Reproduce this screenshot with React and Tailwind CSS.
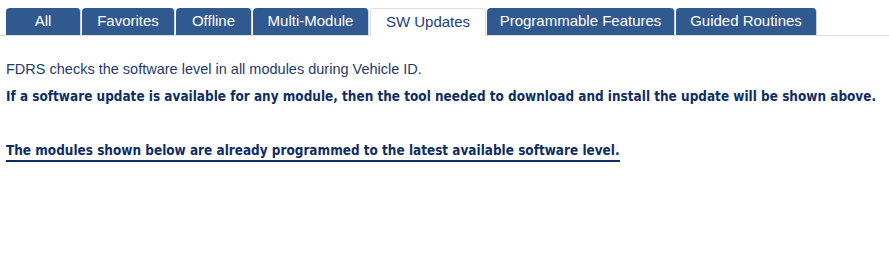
import React from "react";

const tabs = [
  { label: "All", w: "w-[75px]" },
  { label: "Favorites", w: "w-[93px]" },
  { label: "Offline", w: "w-[76px]" },
  { label: "Multi-Module", w: "w-[116px]" },
  { label: "SW Updates", w: "w-[116px]", active: true },
  { label: "Programmable Features", w: "w-[188px]" },
  { label: "Guided Routines", w: "w-[141px]" },
];

export default function App() {
  return (
    <div className="w-[889px] h-[255px] bg-white font-['Liberation_Sans',Arial,sans-serif]">
      <div className="flex items-end pt-[8px] pl-[6px] border-b border-[#dedede]">
        {tabs.map((t) =>
          t.active ? (
            <div
              key={t.label}
              className={`${t.w} h-[28px] -mb-px flex items-center justify-center rounded-t-[4px] border border-b-0 border-[#dcdcdc] bg-white text-[#1b3f7c] text-[15px] mr-px`}
            >
              {t.label}
            </div>
          ) : (
            <div
              key={t.label}
              className={`${t.w} h-[27px] flex items-center justify-center rounded-t-[4px] border-r border-[#c9d3e0] bg-[#30598f] text-white text-[15px] mr-px`}
            >
              {t.label}
            </div>
          )
        )}
      </div>
      <div className="px-[6px] pt-[24px]">
        <p className="text-[14.5px] leading-[18px] text-[#1f3a6a]">
          FDRS checks the software level in all modules during Vehicle ID.
        </p>
        <p className="mt-[11px] whitespace-nowrap font-['DejaVu_Sans_Condensed','DejaVu_Sans',Verdana,sans-serif] font-bold text-[13.45px] leading-[16px] text-[#0e2d63]">
          If a software update is available for any module, then the tool needed to download and install the update will be shown above.
        </p>
        <p className="mt-[38px] inline-block whitespace-nowrap font-['DejaVu_Sans_Condensed','DejaVu_Sans',Verdana,sans-serif] font-bold text-[13.45px] leading-[16px] text-[#0e2d63] border-b-2 border-[#0e2d63] pb-[1px]">
          The modules shown below are already programmed to the latest available software level.
        </p>
      </div>
    </div>
  );
}
